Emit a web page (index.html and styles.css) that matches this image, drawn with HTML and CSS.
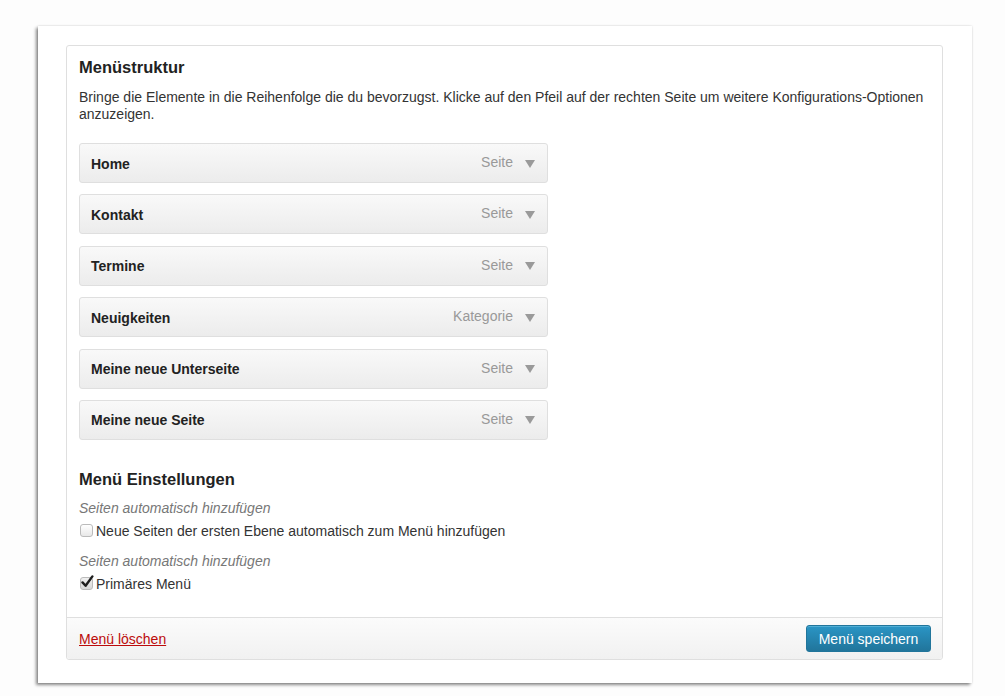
FILE: index.html
```html
<!DOCTYPE html>
<html lang="de">
<head>
<meta charset="utf-8">
<title>Menüstruktur</title>
<link rel="stylesheet" href="styles.css">
</head>
<body>
<div class="window">
  <div class="panel">
    <div class="panel-body">
      <h3 class="title">Menüstruktur</h3>
      <p class="desc">Bringe die Elemente in die Reihenfolge die du bevorzugst. Klicke auf den Pfeil auf der rechten Seite um weitere Konfigurations-Optionen anzuzeigen.</p>
      <ul class="items">
        <li class="item"><span class="item-title">Home</span><span class="item-type">Seite</span><span class="arrow"></span></li>
        <li class="item"><span class="item-title">Kontakt</span><span class="item-type">Seite</span><span class="arrow"></span></li>
        <li class="item"><span class="item-title">Termine</span><span class="item-type">Seite</span><span class="arrow"></span></li>
        <li class="item"><span class="item-title">Neuigkeiten</span><span class="item-type">Kategorie</span><span class="arrow"></span></li>
        <li class="item"><span class="item-title">Meine neue Unterseite</span><span class="item-type">Seite</span><span class="arrow"></span></li>
        <li class="item"><span class="item-title">Meine neue Seite</span><span class="item-type">Seite</span><span class="arrow"></span></li>
      </ul>
      <h3 class="settings-title">Menü Einstellungen</h3>
      <div class="setting-label">Seiten automatisch hinzufügen</div>
      <label class="check"><span class="box"></span>Neue Seiten der ersten Ebene automatisch zum Menü hinzufügen</label>
      <div class="setting-label">Seiten automatisch hinzufügen</div>
      <label class="check"><span class="box checked"><svg viewBox="0 0 14 14" width="14" height="14"><path d="M2.5 7.4 L5.6 10.8 L12.4 1.4" fill="none" stroke="#1e1e1e" stroke-width="2.4" stroke-linecap="round" stroke-linejoin="round"/></svg></span>Primäres Menü</label>
    </div>
    <div class="panel-footer">
      <a class="delete" href="#">Menü löschen</a>
      <button class="save" type="button">Menü speichern</button>
    </div>
  </div>
</div>
</body>
</html>
```

FILE: styles.css
```css
html, body {
  margin: 0;
  padding: 0;
  background: #fdfdfd;
}
body {
  font-family: "Liberation Sans", Arial, sans-serif;
  color: #333;
  font-size: 14px;
  padding: 26px 33px 12px 38px;
}
.window {
  width: 934px;
  height: 657px;
  box-sizing: border-box;
  background: #fff;
  padding: 19px 29px 23px 28px;
  box-shadow: -2px 2px 3px rgba(0,0,0,0.45), 0 0 2px rgba(0,0,0,0.15);
}
.panel {
  border: 1px solid #dfdfdf;
  border-radius: 3px;
  height: 100%;
  box-sizing: border-box;
  display: flex;
  flex-direction: column;
  background: #fff;
}
.panel-body {
  flex: 1;
  padding: 11px 12px 0 12px;
}
.title {
  margin: 0;
  font-size: 16.5px;
  line-height: 21px;
  font-weight: bold;
  color: #222;
}
.desc {
  margin: 11px 0 0;
  line-height: 17px;
  color: #333;
}
.items {
  list-style: none;
  margin: 20px 0 0;
  padding: 0;
  width: 469px;
}
.item {
  height: 40px;
  box-sizing: border-box;
  border: 1px solid #dfdfdf;
  border-radius: 3px;
  background: linear-gradient(#f9f9f9, #ececec);
  display: flex;
  align-items: center;
  padding: 0 12px 0 11px;
  margin-bottom: 11.4px;
}
.item-title {
  flex: 1;
  font-weight: bold;
  color: #222;
  margin-top: 1px;
}
.item-type {
  color: #999;
  margin-top: -2px;
}
.arrow {
  width: 0;
  height: 0;
  border-left: 5px solid transparent;
  border-right: 5px solid transparent;
  border-top: 8px solid #9a9a9a;
  margin-left: 12px;
  margin-top: 1px;
}
.settings-title {
  margin: 28px 0 0;
  font-size: 16.5px;
  line-height: 22px;
  font-weight: bold;
  color: #222;
}
.setting-label {
  margin-top: 9px;
  font-style: italic;
  color: #777;
  line-height: 18px;
}
.check {
  display: flex;
  align-items: center;
  line-height: 18px;
  margin-top: 5px;
  margin-bottom: 12px;
  color: #333;
}
.box {
  width: 11px;
  height: 11px;
  border: 1px solid #bbb;
  border-radius: 3px;
  background: linear-gradient(#fff, #e8e8e8);
  margin: 0 3px 0 1px;
  position: relative;
}
.box.checked {
  background: linear-gradient(#f0f0f0, #d8d8d8);
}
.box svg {
  position: absolute;
  left: -1px;
  top: -3px;
}
.panel-footer {
  height: 42px;
  box-sizing: border-box;
  border-top: 1px solid #dfdfdf;
  background: linear-gradient(#fbfbfb, #f1f1f1);
  display: flex;
  align-items: center;
  justify-content: space-between;
  padding: 0 11px 0 12px;
  border-radius: 0 0 3px 3px;
}
.delete {
  color: #bc0b0b;
  text-decoration: underline;
}
.save {
  font-family: "Liberation Sans", Arial, sans-serif;
  font-size: 14px;
  color: #fff;
  width: 125px;
  height: 27px;
  border: 1px solid #21759b;
  border-radius: 3px;
  background: linear-gradient(#2a95c5, #21759b);
  box-shadow: inset 0 1px 0 rgba(120,200,230,0.5);
  padding: 0;
}
```
